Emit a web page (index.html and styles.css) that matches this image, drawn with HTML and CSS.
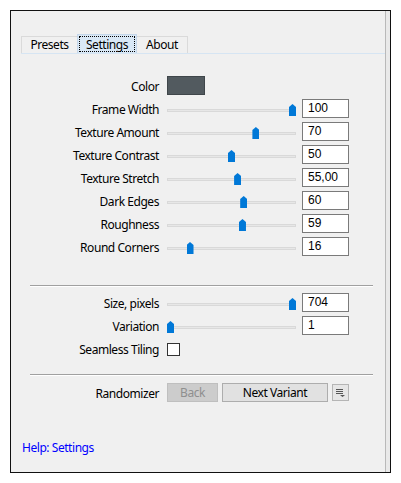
FILE: index.html
```html
<!DOCTYPE html>
<html>
<head>
  <meta charset="UTF-8">
  <meta name="viewport" content="width=device-width, initial-scale=1.0">
  <title>Settings</title>
  <link rel="stylesheet" href="styles.css">
</head>
<body>

  <div class="window">
    <div class="panel">

      <!-- tabs -->
      <div class="tabs">
        <div class="tab tab-presets">Presets</div>
        <div class="tab tab-settings active"><span>Settings</span></div>
        <div class="tab tab-about">About</div>
      </div>

      <!-- main settings -->
      <div class="form form-main">
        <div class="row">
          <div class="label">Color</div>
          <div class="swatch"></div>
        </div>
        <div class="row">
          <div class="label">Frame Width</div>
          <div class="slider"><div class="track"></div><div class="thumb" style="--v:1"></div></div>
          <div class="input">100</div>
        </div>
        <div class="row">
          <div class="label">Texture Amount</div>
          <div class="slider"><div class="track"></div><div class="thumb" style="--v:0.70"></div></div>
          <div class="input">70</div>
        </div>
        <div class="row">
          <div class="label">Texture Contrast</div>
          <div class="slider"><div class="track"></div><div class="thumb" style="--v:0.50"></div></div>
          <div class="input">50</div>
        </div>
        <div class="row">
          <div class="label">Texture Stretch</div>
          <div class="slider"><div class="track"></div><div class="thumb" style="--v:0.55"></div></div>
          <div class="input">55,00</div>
        </div>
        <div class="row">
          <div class="label">Dark Edges</div>
          <div class="slider"><div class="track"></div><div class="thumb" style="--v:0.60"></div></div>
          <div class="input">60</div>
        </div>
        <div class="row">
          <div class="label">Roughness</div>
          <div class="slider"><div class="track"></div><div class="thumb" style="--v:0.59"></div></div>
          <div class="input">59</div>
        </div>
        <div class="row">
          <div class="label">Round Corners</div>
          <div class="slider"><div class="track"></div><div class="thumb" style="--v:0.16"></div></div>
          <div class="input">16</div>
        </div>
      </div>

      <div class="sep sep-first"></div>

      <!-- size -->
      <div class="form">
        <div class="row">
          <div class="label">Size, pixels</div>
          <div class="slider"><div class="track"></div><div class="thumb" style="--v:1"></div></div>
          <div class="input">704</div>
        </div>
        <div class="row">
          <div class="label">Variation</div>
          <div class="slider"><div class="track"></div><div class="thumb" style="--v:0"></div></div>
          <div class="input">1</div>
        </div>
        <div class="row">
          <div class="label">Seamless Tiling</div>
          <div class="checkbox"></div>
        </div>
      </div>

      <div class="sep sep-second"></div>

      <!-- randomizer -->
      <div class="row rand-row">
        <div class="label">Randomizer</div>
        <div class="btn btn-back">Back</div>
        <div class="btn btn-next">Next Variant</div>
        <div class="btn btn-menu">
          <svg width="9" height="9" viewBox="0 0 9 9">
            <path d="M0 1.5h7M0 3.5h7M0 5.5h7" stroke="#555" stroke-width="1"/>
            <path d="M4 7h5l-2.5 2z" fill="#555"/>
          </svg>
        </div>
      </div>

      <div class="help">Help: Settings</div>
    </div>
    <div class="side"></div>
  </div>

</body>
</html>
```

FILE: styles.css
```css
body {
  margin: 0;
  background: #fff;
  font-family: "Noto Sans", "Open Sans", sans-serif;
  font-size: 12px;
  letter-spacing: -0.45px;
  color: #000;
}
.window {
  margin: 10px 0 0 10px;
  width: 381px;
  height: 463px;
  box-sizing: border-box;
  border: 1px solid #111;
  background: #f0f0f0;
  display: flex;
}
.panel {
  flex: 1;
  display: flex;
  flex-direction: column;
  padding-top: 25px;
  border-right: 1px solid #b9b9b9;
}
.side {
  width: 4px;
  background: #e9e9e9;
}
.tabs {
  display: flex;
  margin-left: 10px;
  height: 17px;
  border-bottom: 1px solid #d6e5f3;
}
.tab {
  box-sizing: border-box;
  height: 17px;
  line-height: 16px;
  text-align: center;
  border: 1px solid #dadada;
  border-bottom: none;
}
.tab-presets {
  width: 56px;
  border-right: none;
}
.tab-settings {
  width: 60px;
}
.tab-about {
  width: 51px;
  border-left: none;
}
.tab.active {
  height: 19px;
  margin-top: -2px;
  background: #d9e8f6;
  border-color: #c5d7ea;
  padding: 1px;
}
.tab.active span {
  display: block;
  height: 16px;
  line-height: 15px;
  box-sizing: border-box;
  border: 1px dotted #000;
}
.form {
  display: flex;
  flex-direction: column;
}
.form-main {
  margin-top: 22px;
}
.row {
  display: flex;
  align-items: center;
  height: 19px;
  margin-bottom: 4px;
}
.label {
  width: 148px;
  margin-right: 8px;
  padding-top: 2px;
  text-align: right;
  white-space: nowrap;
}
.swatch {
  width: 38px;
  height: 19px;
  box-sizing: border-box;
  background: #525a5f;
  border: 1px solid #3f464a;
}
.slider {
  position: relative;
  width: 129px;
  height: 19px;
  margin-right: 6px;
}
.track {
  position: absolute;
  left: 0;
  right: 0;
  top: 10px;
  height: 3px;
  box-sizing: border-box;
  background: #e7e7e7;
  border: 1px solid #d9d9d9;
}
.thumb {
  position: absolute;
  top: 5px;
  left: calc(var(--v) * 122px);
  width: 7px;
  height: 12px;
  background: #0078d7;
  clip-path: polygon(0 3px, 3.5px 0, 7px 3px, 7px 12px, 0 12px);
}
.input {
  width: 47px;
  height: 19px;
  box-sizing: border-box;
  border: 1px solid #7a7a7a;
  background: #fff;
  padding-left: 5px;
  font-family: "Liberation Sans", Arial, sans-serif;
  font-size: 12px;
  letter-spacing: 0;
  line-height: 17px;
}
.checkbox {
  width: 13px;
  height: 13px;
  box-sizing: border-box;
  margin-top: 2px;
  background: #fff;
  border: 1px solid #333;
}
.sep {
  margin-left: 19px;
  width: 343px;
  height: 1px;
  background: #a0a0a0;
  border-bottom: 1px solid #fff;
}
.sep-first {
  margin-top: 25px;
  margin-bottom: 6px;
}
.sep-second {
  margin-top: 12px;
  margin-bottom: 7px;
}
.rand-row {
  height: 19px;
}
.btn {
  box-sizing: border-box;
  height: 19px;
  line-height: 17px;
  text-align: center;
  border: 1px solid #adadad;
  background: #e1e1e1;
  margin-right: 4px;
}
.btn-back {
  width: 51px;
  background: #cccccc;
  border-color: #bfbfbf;
  color: #8f8f8f;
}
.btn-next {
  width: 106px;
}
.btn-menu {
  width: 17px;
  height: 17px;
  display: flex;
  align-items: center;
  justify-content: center;
  background: #e6e6e6;
  border-color: #b5b5b5;
}
.help {
  margin-top: auto;
  padding: 0 0 16px 11px;
  color: #0000ff;
}
```
